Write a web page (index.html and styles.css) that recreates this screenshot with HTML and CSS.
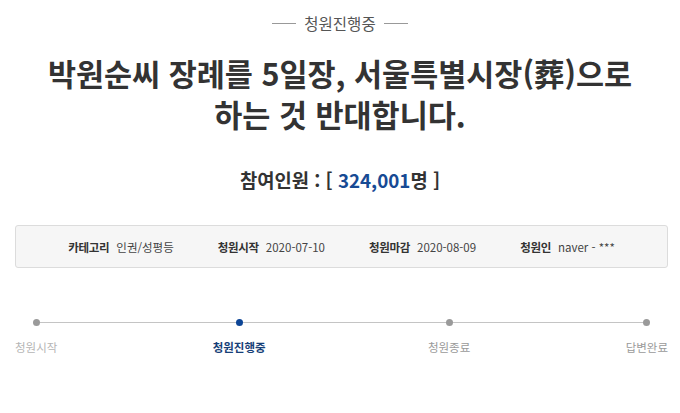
FILE: index.html
```html
<!DOCTYPE html>
<html lang="ko">
<head>
<meta charset="utf-8">
<link rel="stylesheet" href="styles.css">
</head>
<body>
<div class="page">
  <div class="status"><span class="rule"></span><span class="status-text">청원진행중</span><span class="rule"></span></div>
  <h1 class="title">박원순씨 장례를 5일장, 서울특별시장(葬)으로<br>하는 것 반대합니다.</h1>
  <div class="count">참여인원 : [ <span class="num">324,001</span>명 ]</div>
  <div class="info">
    <div class="item"><span class="label">카테고리</span><span class="value">인권/성평등</span></div>
    <div class="item"><span class="label">청원시작</span><span class="value">2020-07-10</span></div>
    <div class="item"><span class="label">청원마감</span><span class="value">2020-08-09</span></div>
    <div class="item"><span class="label">청원인</span><span class="value">naver - ***</span></div>
  </div>
  <div class="steps">
    <div class="step done"><span class="dot"></span><span class="step-label">청원시작</span></div>
    <div class="step active"><span class="dot"></span><span class="step-label">청원진행중</span></div>
    <div class="step"><span class="dot"></span><span class="step-label">청원종료</span></div>
    <div class="step"><span class="dot"></span><span class="step-label">답변완료</span></div>
  </div>
</div>
</body>
</html>
```

FILE: styles.css
```css
* { box-sizing: border-box; }
html, body { margin: 0; padding: 0; background: #fff; }
body {
  font-family: "Noto Sans CJK KR", "Noto Sans", sans-serif;
  color: #333;
}
.page { width: 680px; }

.status {
  margin-top: 13px;
  display: flex;
  justify-content: center;
  align-items: center;
  gap: 8px;
  height: 20px;
}
.rule { width: 24px; height: 1px; background: #999; }
.status-text { font-size: 15.5px; line-height: 20px; color: #555; }

.title {
  margin: 20px 0 0;
  text-align: center;
  font-size: 30.5px;
  line-height: 41px;
  font-weight: 700;
  color: #333;
}

.count {
  margin-top: 32px;
  text-align: center;
  font-size: 18.75px;
  line-height: 26px;
  font-weight: 700;
  color: #333;
}
.count .num { color: #174a94; }

.info {
  margin: 32px 12px 0 15px;
  height: 43px;
  border: 1px solid #dcdcdc;
  border-radius: 3px;
  background: #f6f6f6;
  display: flex;
  justify-content: center;
  align-items: center;
  gap: 44px;
  font-size: 11.5px;
  line-height: 16px;
}
.item { display: flex; gap: 7px; }
.label { font-weight: 700; color: #333; letter-spacing: -0.3px; }
.value { color: #444; }

.steps {
  position: relative;
  margin: 51px 12px 0 15px;
  display: flex;
  justify-content: space-between;
}
.steps::before {
  content: "";
  position: absolute;
  left: 22px;
  right: 21px;
  top: 3px;
  height: 1px;
  background: #c4c4c4;
}
.step {
  position: relative;
  display: flex;
  flex-direction: column;
  align-items: center;
  gap: 13px;
}
.step.active { margin-right: 7px; }
.dot {
  width: 7px;
  height: 7px;
  border-radius: 50%;
  background: #9a9a9a;
}
.step-label {
  font-size: 11.5px;
  line-height: 16px;
  color: #9a9a9a;
}
.step.done .step-label { color: #b5b5b5; }
.step.active .dot { background: #0d4596; }
.step.active .step-label { color: #173f78; font-weight: 700; }
```
